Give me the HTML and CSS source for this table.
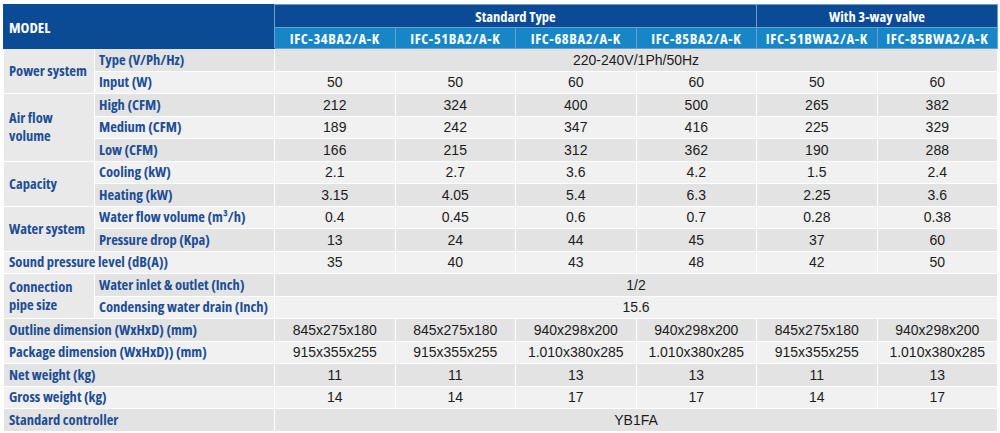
FILE: index.html
```html
<!DOCTYPE html>
<html>
<head>
<meta charset="utf-8">
<link rel="stylesheet" href="styles.css">
</head>
<body>
<table class="spec">
  <colgroup>
    <col class="c-group"><col class="c-sub">
    <col class="c-val"><col class="c-val"><col class="c-val"><col class="c-val"><col class="c-val"><col class="c-val">
  </colgroup>
  <thead>
    <tr class="h1">
      <th class="model" colspan="2" rowspan="2">MODEL</th>
      <th colspan="4">Standard Type</th>
      <th colspan="2">With 3-way valve</th>
    </tr>
    <tr class="h2">
      <th>IFC-34BA2/A-K</th><th>IFC-51BA2/A-K</th><th>IFC-68BA2/A-K</th><th>IFC-85BA2/A-K</th><th>IFC-51BWA2/A-K</th><th>IFC-85BWA2/A-K</th>
    </tr>
  </thead>
  <tbody>
    <tr class="d">
      <td class="grp" rowspan="2">Power system</td><td class="sub">Type (V/Ph/Hz)</td>
      <td colspan="6" class="v">220-240V/1Ph/50Hz</td>
    </tr>
    <tr class="l">
      <td class="sub">Input (W)</td>
      <td class="v">50</td><td class="v">50</td><td class="v">60</td><td class="v">60</td><td class="v">50</td><td class="v">60</td>
    </tr>
    <tr class="d">
      <td class="grp" rowspan="3">Air flow<br>volume</td><td class="sub">High (CFM)</td>
      <td class="v">212</td><td class="v">324</td><td class="v">400</td><td class="v">500</td><td class="v">265</td><td class="v">382</td>
    </tr>
    <tr class="l">
      <td class="sub">Medium (CFM)</td>
      <td class="v">189</td><td class="v">242</td><td class="v">347</td><td class="v">416</td><td class="v">225</td><td class="v">329</td>
    </tr>
    <tr class="d">
      <td class="sub">Low (CFM)</td>
      <td class="v">166</td><td class="v">215</td><td class="v">312</td><td class="v">362</td><td class="v">190</td><td class="v">288</td>
    </tr>
    <tr class="l">
      <td class="grp" rowspan="2">Capacity</td><td class="sub">Cooling (kW)</td>
      <td class="v">2.1</td><td class="v">2.7</td><td class="v">3.6</td><td class="v">4.2</td><td class="v">1.5</td><td class="v">2.4</td>
    </tr>
    <tr class="d">
      <td class="sub">Heating (kW)</td>
      <td class="v">3.15</td><td class="v">4.05</td><td class="v">5.4</td><td class="v">6.3</td><td class="v">2.25</td><td class="v">3.6</td>
    </tr>
    <tr class="l">
      <td class="grp" rowspan="2">Water system</td><td class="sub">Water flow volume (m³/h)</td>
      <td class="v">0.4</td><td class="v">0.45</td><td class="v">0.6</td><td class="v">0.7</td><td class="v">0.28</td><td class="v">0.38</td>
    </tr>
    <tr class="d">
      <td class="sub">Pressure drop (Kpa)</td>
      <td class="v">13</td><td class="v">24</td><td class="v">44</td><td class="v">45</td><td class="v">37</td><td class="v">60</td>
    </tr>
    <tr class="l">
      <td class="full" colspan="2">Sound pressure level (dB(A))</td>
      <td class="v">35</td><td class="v">40</td><td class="v">43</td><td class="v">48</td><td class="v">42</td><td class="v">50</td>
    </tr>
    <tr class="d">
      <td class="grp" rowspan="2">Connection<br>pipe size</td><td class="sub">Water inlet &amp; outlet (Inch)</td>
      <td colspan="6" class="v">1/2</td>
    </tr>
    <tr class="l">
      <td class="sub">Condensing water drain (Inch)</td>
      <td colspan="6" class="v">15.6</td>
    </tr>
    <tr class="d">
      <td class="full" colspan="2">Outline dimension (WxHxD) (mm)</td>
      <td class="v">845x275x180</td><td class="v">845x275x180</td><td class="v">940x298x200</td><td class="v">940x298x200</td><td class="v">845x275x180</td><td class="v">940x298x200</td>
    </tr>
    <tr class="l">
      <td class="full" colspan="2">Package dimension (WxHxD)) (mm)</td>
      <td class="v">915x355x255</td><td class="v">915x355x255</td><td class="v">1.010x380x285</td><td class="v">1.010x380x285</td><td class="v">915x355x255</td><td class="v">1.010x380x285</td>
    </tr>
    <tr class="d">
      <td class="full" colspan="2">Net weight (kg)</td>
      <td class="v">11</td><td class="v">11</td><td class="v">13</td><td class="v">13</td><td class="v">11</td><td class="v">13</td>
    </tr>
    <tr class="l">
      <td class="full" colspan="2">Gross weight (kg)</td>
      <td class="v">14</td><td class="v">14</td><td class="v">17</td><td class="v">17</td><td class="v">14</td><td class="v">17</td>
    </tr>
    <tr class="d">
      <td class="full" colspan="2">Standard controller</td>
      <td colspan="6" class="v">YB1FA</td>
    </tr>
  </tbody>
</table>
</body>
</html>
```

FILE: styles.css
```css
html, body {
  margin: 0;
  padding: 0;
  background: #ffffff;
}
body {
  padding: 4px 3px 0 3px;
  font-family: "Liberation Sans", Arial, sans-serif;
}
.spec {
  width: 994px;
  border-collapse: collapse;
  table-layout: fixed;
}
.c-group { width: 91px; }
.c-sub { width: 180px; }
.c-val { width: 120.5px; }

.spec th {
  font-family: "Open Sans", sans-serif;
  font-stretch: 75%;
  font-weight: bold;
  color: #ffffff;
  padding: 0;
  border: 1px solid #6a9fd0;
  white-space: nowrap;
}
.h1 th {
  background: #0b4b95;
  height: 22px;
  font-size: 14.5px;
}
.h2 th {
  background: #1786c6;
  height: 20px;
  font-size: 14.5px;
  letter-spacing: 0.6px;
}
.spec th.model {
  background: #0b4b95;
  text-align: left;
  padding-left: 5px;
  font-size: 15px;
  font-stretch: 85%;
  letter-spacing: 0;
  border-color: #0b4b95 #6a9fd0 #0b4b95 #0b4b95;
}
.spec td {
  border: 1px solid #ffffff;
  padding: 0;
  height: 21.5px;
  white-space: nowrap;
}
.grp, .sub, .full {
  font-family: "Open Sans", sans-serif;
  font-stretch: 76%;
  font-weight: bold;
  font-size: 14.5px;
  color: #1d4e95;
  line-height: 16px;
}
.spec td.grp {
  background: #e9e9e9;
  padding-left: 5px;
  line-height: 18px;
}
.spec td.sub { padding-left: 4px; }
.spec td.full { padding-left: 5px; }
.v {
  text-align: center;
  font-size: 14px;
  color: #1c1c1c;
}
.d td { background: #e3e3e3; }
.l td { background: #f1f1f1; }
.d td.grp, .l td.grp { background: #e9e9e9; }
```
